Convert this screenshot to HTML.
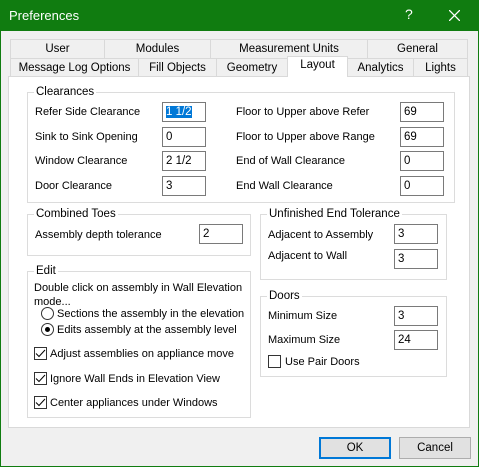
<!DOCTYPE html><html><head><style>
*{box-sizing:border-box;margin:0;padding:0}
body{width:479px;height:467px;position:relative;background:#f0f0f0;font-family:"Liberation Sans",Arial,sans-serif;font-size:11px;color:#000;overflow:hidden}
.a{position:absolute;white-space:nowrap}
.win{position:absolute;left:0;top:0;width:479px;height:467px;border:1px solid #107c10}
.title{position:absolute;left:0;top:0;width:479px;height:31px;background:#107c10;color:#fff}
.tab{position:absolute;height:19px;border:1px solid #d9d9d9;border-bottom:none;background:#f0f0f0;text-align:center;line-height:18px;font-size:11.5px}
.panel{position:absolute;left:8px;top:76px;width:462px;height:352px;background:#fff;border:1px solid #d9d9d9}
.grp{position:absolute;border:1px solid #dcdcdc}
.gl{position:absolute;top:-8px;left:6px;background:#fff;padding:0 2px;line-height:14px;font-size:11.5px}
.in{position:absolute;width:44px;height:20px;border:1px solid #7a7a7a;background:#fff;padding-left:3px;line-height:18px;font-size:11.5px}
.cb{position:absolute;width:13px;height:13px;border:1px solid #333;background:#fff}
.rb{position:absolute;width:13px;height:13px;border:1px solid #333;border-radius:50%;background:#fff}
.btn{position:absolute;height:22px;width:72px;border:1px solid #adadad;background:#e1e1e1;text-align:center;line-height:20px;font-size:11.5px}
</style></head><body>
<div class="win"></div>
<div class="title"><span class="a" style="left:9px;top:8px;font-size:13px">Preferences</span>
<span class="a" style="left:405px;top:6px;font-size:14px">?</span>
<svg class="a" style="left:449px;top:10px" width="11" height="11"><path d="M0 0L11 11M11 0L0 11" stroke="#fff" stroke-width="1.3"/></svg></div>
<div class="tab" style="left:10px;top:39px;width:95px">User</div>
<div class="tab" style="left:104px;top:39px;width:107px">Modules</div>
<div class="tab" style="left:210px;top:39px;width:158px">Measurement Units</div>
<div class="tab" style="left:367px;top:39px;width:101px">General</div>
<div class="tab" style="left:10px;top:58px;width:129px">Message Log Options</div>
<div class="tab" style="left:138px;top:58px;width:79px">Fill Objects</div>
<div class="tab" style="left:216px;top:58px;width:72px">Geometry</div>
<div class="tab" style="left:347px;top:58px;width:67px">Analytics</div>
<div class="tab" style="left:413px;top:58px;width:55px">Lights</div>
<div class="panel"></div>
<div class="tab" style="left:287px;top:56px;width:61px;height:21px;background:#fff;z-index:2;line-height:16px">Layout</div>

<div class="grp" style="left:27px;top:92px;width:428px;height:111px"><span class="gl">Clearances</span></div>
<span class="a" style="left:35px;top:106px">Refer Side Clearance</span>
<div class="in" style="left:162px;top:102px"><span style="background:#0078d7;color:#fff">1 1/2</span></div>
<span class="a" style="left:35px;top:131px">Sink to Sink Opening</span><div class="in" style="left:162px;top:127px">0</div>
<span class="a" style="left:35px;top:155px">Window Clearance</span><div class="in" style="left:162px;top:151px">2 1/2</div>
<span class="a" style="left:35px;top:180px">Door Clearance</span><div class="in" style="left:162px;top:176px">3</div>
<span class="a" style="left:236px;top:106px">Floor to Upper above Refer</span><div class="in" style="left:400px;top:102px">69</div>
<span class="a" style="left:236px;top:131px">Floor to Upper above Range</span><div class="in" style="left:400px;top:127px">69</div>
<span class="a" style="left:236px;top:155px">End of Wall Clearance</span><div class="in" style="left:400px;top:151px">0</div>
<span class="a" style="left:236px;top:180px">End Wall Clearance</span><div class="in" style="left:400px;top:176px">0</div>

<div class="grp" style="left:27px;top:214px;width:224px;height:42px"><span class="gl">Combined Toes</span></div>
<span class="a" style="left:35px;top:229px">Assembly depth tolerance</span><div class="in" style="left:199px;top:224px">2</div>

<div class="grp" style="left:27px;top:271px;width:224px;height:147px"><span class="gl">Edit</span></div>
<span class="a" style="left:34px;top:282px">Double click on assembly in Wall Elevation</span>
<span class="a" style="left:34px;top:296px">mode...</span>
<div class="rb" style="left:41px;top:307px"></div><span class="a" style="left:57px;top:308px">Sections the assembly in the elevation</span>
<div class="rb" style="left:41px;top:323px"><div style="position:absolute;left:3px;top:3px;width:5px;height:5px;border-radius:50%;background:#000"></div></div><span class="a" style="left:57px;top:324px">Edits assembly at the assembly level</span>
<div class="cb" style="left:34px;top:347px"><svg width="11" height="11" style="position:absolute;left:0;top:0"><path d="M1 5.5L4 8.5L10 2" stroke="#000" fill="none"/></svg></div><span class="a" style="left:50px;top:348px">Adjust assemblies on appliance move</span>
<div class="cb" style="left:34px;top:372px"><svg width="11" height="11" style="position:absolute;left:0;top:0"><path d="M1 5.5L4 8.5L10 2" stroke="#000" fill="none"/></svg></div><span class="a" style="left:50px;top:373px">Ignore Wall Ends in Elevation View</span>
<div class="cb" style="left:34px;top:396px"><svg width="11" height="11" style="position:absolute;left:0;top:0"><path d="M1 5.5L4 8.5L10 2" stroke="#000" fill="none"/></svg></div><span class="a" style="left:50px;top:397px">Center appliances under Windows</span>

<div class="grp" style="left:260px;top:214px;width:187px;height:66px"><span class="gl">Unfinished End Tolerance</span></div>
<span class="a" style="left:268px;top:229px">Adjacent to Assembly</span><div class="in" style="left:394px;top:224px">3</div>
<span class="a" style="left:268px;top:250px">Adjacent to Wall</span><div class="in" style="left:394px;top:249px">3</div>

<div class="grp" style="left:260px;top:296px;width:187px;height:81px"><span class="gl">Doors</span></div>
<span class="a" style="left:268px;top:310px">Minimum Size</span><div class="in" style="left:394px;top:306px">3</div>
<span class="a" style="left:268px;top:334px">Maximum Size</span><div class="in" style="left:394px;top:330px">24</div>
<div class="cb" style="left:268px;top:355px"></div><span class="a" style="left:285px;top:356px">Use Pair Doors</span>

<div class="btn" style="left:319px;top:437px;border:2px solid #0078d7;line-height:18px">OK</div>
<div class="btn" style="left:399px;top:437px">Cancel</div>
</body></html>
